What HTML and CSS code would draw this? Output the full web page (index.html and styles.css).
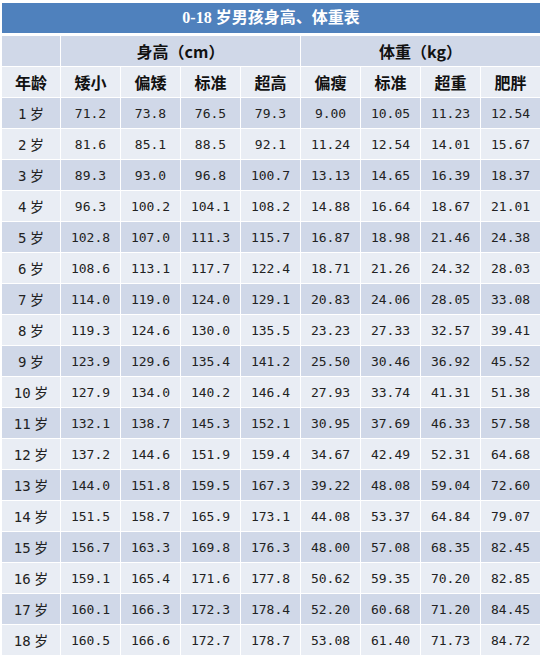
FILE: index.html
```html
<!DOCTYPE html>
<html lang="zh">
<head>
<meta charset="utf-8">
<title>0-18 岁男孩身高、体重表</title>
<link rel="stylesheet" href="styles.css">
</head>
<body>
<div class="sheet">
  <div class="title">0-18 岁男孩身高、体重表</div>
  <table class="grid">
    <colgroup>
      <col class="c-age"><col class="c"><col class="c"><col class="c"><col class="c"><col class="c"><col class="c"><col class="c"><col class="c">
    </colgroup>
    <thead>
      <tr class="dark head">
        <th></th>
        <th colspan="4">身高（cm）</th>
        <th colspan="4">体重（kg）</th>
      </tr>
      <tr class="light head">
        <th>年龄</th>
        <th>矮小</th><th>偏矮</th><th>标准</th><th>超高</th>
        <th>偏瘦</th><th>标准</th><th>超重</th><th>肥胖</th>
      </tr>
    </thead>
    <tbody>
      <tr class="dark"><td class="age">1 岁</td><td>71.2</td><td>73.8</td><td>76.5</td><td>79.3</td><td>9.00</td><td>10.05</td><td>11.23</td><td>12.54</td></tr>
      <tr class="light"><td class="age">2 岁</td><td>81.6</td><td>85.1</td><td>88.5</td><td>92.1</td><td>11.24</td><td>12.54</td><td>14.01</td><td>15.67</td></tr>
      <tr class="dark"><td class="age">3 岁</td><td>89.3</td><td>93.0</td><td>96.8</td><td>100.7</td><td>13.13</td><td>14.65</td><td>16.39</td><td>18.37</td></tr>
      <tr class="light"><td class="age">4 岁</td><td>96.3</td><td>100.2</td><td>104.1</td><td>108.2</td><td>14.88</td><td>16.64</td><td>18.67</td><td>21.01</td></tr>
      <tr class="dark"><td class="age">5 岁</td><td>102.8</td><td>107.0</td><td>111.3</td><td>115.7</td><td>16.87</td><td>18.98</td><td>21.46</td><td>24.38</td></tr>
      <tr class="light"><td class="age">6 岁</td><td>108.6</td><td>113.1</td><td>117.7</td><td>122.4</td><td>18.71</td><td>21.26</td><td>24.32</td><td>28.03</td></tr>
      <tr class="dark"><td class="age">7 岁</td><td>114.0</td><td>119.0</td><td>124.0</td><td>129.1</td><td>20.83</td><td>24.06</td><td>28.05</td><td>33.08</td></tr>
      <tr class="light"><td class="age">8 岁</td><td>119.3</td><td>124.6</td><td>130.0</td><td>135.5</td><td>23.23</td><td>27.33</td><td>32.57</td><td>39.41</td></tr>
      <tr class="dark"><td class="age">9 岁</td><td>123.9</td><td>129.6</td><td>135.4</td><td>141.2</td><td>25.50</td><td>30.46</td><td>36.92</td><td>45.52</td></tr>
      <tr class="light"><td class="age">10 岁</td><td>127.9</td><td>134.0</td><td>140.2</td><td>146.4</td><td>27.93</td><td>33.74</td><td>41.31</td><td>51.38</td></tr>
      <tr class="dark"><td class="age">11 岁</td><td>132.1</td><td>138.7</td><td>145.3</td><td>152.1</td><td>30.95</td><td>37.69</td><td>46.33</td><td>57.58</td></tr>
      <tr class="light"><td class="age">12 岁</td><td>137.2</td><td>144.6</td><td>151.9</td><td>159.4</td><td>34.67</td><td>42.49</td><td>52.31</td><td>64.68</td></tr>
      <tr class="dark"><td class="age">13 岁</td><td>144.0</td><td>151.8</td><td>159.5</td><td>167.3</td><td>39.22</td><td>48.08</td><td>59.04</td><td>72.60</td></tr>
      <tr class="light"><td class="age">14 岁</td><td>151.5</td><td>158.7</td><td>165.9</td><td>173.1</td><td>44.08</td><td>53.37</td><td>64.84</td><td>79.07</td></tr>
      <tr class="dark"><td class="age">15 岁</td><td>156.7</td><td>163.3</td><td>169.8</td><td>176.3</td><td>48.00</td><td>57.08</td><td>68.35</td><td>82.45</td></tr>
      <tr class="light"><td class="age">16 岁</td><td>159.1</td><td>165.4</td><td>171.6</td><td>177.8</td><td>50.62</td><td>59.35</td><td>70.20</td><td>82.85</td></tr>
      <tr class="dark"><td class="age">17 岁</td><td>160.1</td><td>166.3</td><td>172.3</td><td>178.4</td><td>52.20</td><td>60.68</td><td>71.20</td><td>84.45</td></tr>
      <tr class="light"><td class="age">18 岁</td><td>160.5</td><td>166.6</td><td>172.7</td><td>178.7</td><td>53.08</td><td>61.40</td><td>71.73</td><td>84.72</td></tr>
    </tbody>
  </table>
</div>
</body>
</html>
```
FILE: styles.css
```css
html, body {
  margin: 0;
  padding: 0;
  background: #ffffff;
}

.sheet {
  padding: 3px 0 0 1px;
  width: 540px;
  font-family: "DejaVu Sans Mono", "Noto Sans CJK SC", monospace;
}

.title {
  margin-left: 1px;
  width: 538px;
  height: 30px;
  line-height: 30px;
  background: #4f81bd;
  color: #ffffff;
  font-family: "Liberation Serif", "Noto Sans CJK SC", serif;
  font-weight: bold;
  font-size: 16px;
  text-align: center;
}

.grid {
  margin-top: 2px;
  border-collapse: separate;
  border-spacing: 1px;
  table-layout: fixed;
  width: 540px;
}

.c-age { width: 58px; }
.c { width: 59px; }

.grid th,
.grid td {
  height: 30px;
  padding: 0;
  text-align: center;
  vertical-align: middle;
}

.grid th {
  font-family: "Noto Sans CJK SC", sans-serif;
  font-weight: bold;
  font-size: 16px;
  color: #111111;
}

.grid td {
  font-family: "DejaVu Sans Mono", "Noto Sans CJK SC", monospace;
  font-size: 13px;
  color: #222222;
}

.grid td.age {
  font-family: "DejaVu Sans Mono", "Noto Sans CJK SC", monospace;
  font-size: 14px;
  word-spacing: -5px;
}

.dark th, .dark td { background: #d0d8e8; }
.light th, .light td { background: #e9edf4; }
```
